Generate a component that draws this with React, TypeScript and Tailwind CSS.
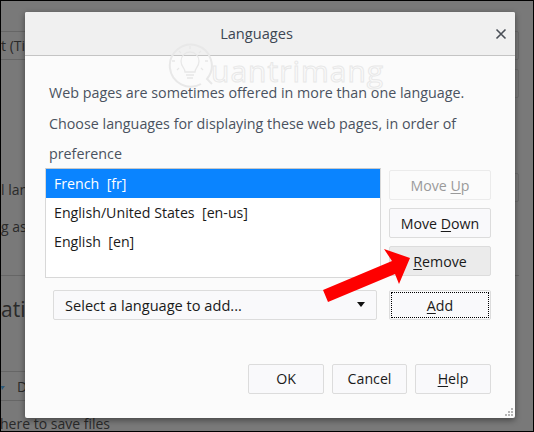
const font = "font-['Open_Sans','Noto_Sans',sans-serif]";

function Btn({ children, className = "", disabled = false }: { children: React.ReactNode; className?: string; disabled?: boolean }) {
  return (
    <div className={`h-[30px] flex items-center justify-center rounded-[2px] border text-[14.2px] ${disabled ? "text-[#9a9a9a] border-[#ebebeb]" : "text-[#1a1a1a] border-[#dcdcdc]"} ${className}`}>
      {children}
    </div>
  );
}

const bgText = "absolute text-[14px] text-[#2a2a2a] leading-[22px] whitespace-nowrap overflow-hidden";

export default function App() {
  return (
    <div className={`relative w-[534px] h-[432px] overflow-hidden bg-[#797979] border border-black ${font}`}>
      {/* page behind the dialog */}
      <div className="absolute left-0 top-[30px] w-[24px] h-[29px] border-y border-[#666] text-[14px] text-[#2a2a2a] leading-[28px] whitespace-nowrap overflow-hidden">t (Ti</div>
      <div className="absolute left-[510px] top-[30px] w-[8px] h-[29px] border border-[#6c6c6c] rounded-[2px]" />
      <div className="absolute left-[510px] top-[68px] w-[8px] h-[29px] border border-[#6c6c6c] rounded-[2px]" />
      <div className="absolute left-[510px] top-[172px] w-[8px] h-[29px] border border-[#6c6c6c] rounded-[2px]" />
      <div className={`${bgText} left-0 top-[178px] w-[24px]`}>l lan</div>
      <div className={`${bgText} left-0 top-[215px] w-[24px]`}>g as</div>
      <div className="absolute left-0 top-[274px] w-[24px] h-px bg-[#666]" />
      <div className="absolute left-[510px] top-[274px] w-[8px] h-px bg-[#666]" />
      <div className="absolute left-0 top-[293px] w-[24px] text-[21px] text-[#2a2a2a] leading-[30px] whitespace-nowrap overflow-hidden">atio</div>
      <div className="absolute left-0 top-[370px] w-[24px] h-px bg-[#666]" />
      <div className="absolute left-0 top-[399px] w-[24px] h-px bg-[#666]" />
      <svg viewBox="0 0 4 4" className="absolute left-0 top-[385px] w-[4px] h-[4px]"><path d="M0 0h4L1 4z" fill="#2b5a7a" /></svg>
      <div className={`${bgText} left-[16px] top-[375px] w-[8px]`}>D</div>
      <div className={`${bgText} -left-[1px] top-[412px] overflow-visible`}>here to save files</div>

      {/* dialog */}
      <div className="absolute left-[24px] top-[11px] w-[490px] h-[406px] rounded-[2px] bg-[#fbfbfb] shadow-[0_2px_6px_rgba(0,0,0,0.45)] flex flex-col">
        <div className="relative h-[44px] shrink-0 bg-[#f0f0f0] border-b border-[#c4c4c4] rounded-t-[2px] flex items-center justify-center pr-[27px] pt-[1px] text-[14.6px] text-[#3d4653]">
          Languages
          <svg viewBox="0 0 12 12" className="absolute right-[8px] top-[16px] w-[12px] h-[12px]" fill="none" stroke="#4a4f57" strokeWidth="1.6">
            <path d="M1.5 1.5l9 9M10.5 1.5l-9 9" />
          </svg>
        </div>

        <div className="relative flex-1 flex flex-col pl-[20px] pr-[24px]">
          {/* watermark */}
          <svg viewBox="0 0 50 50" className="absolute left-[140px] -top-[13px] w-[50px] h-[50px] pointer-events-none" fill="none" stroke="#e8e8e8">
            <path d="M36 41A21 21 0 1 1 42 36L47 41" strokeWidth="2" />
            <path d="M20 29c0-4-4-5-4-11a9 9 0 0 1 18 0c0 6-4 7-4 11z" strokeWidth="1.3" />
            <path d="M21 32h8M22 35h6M25 3v3M10 18H7M43 18h-3M14 8l2 2M36 8l-2 2M12 27l2-2M38 27l-2-2" strokeWidth="1.3" />
          </svg>
          <div className="absolute left-[186px] -top-[5px] text-[30px] tracking-[1px] leading-[40px] text-[#fbfbfb] [-webkit-text-stroke:1px_#e8e8e8] whitespace-nowrap pointer-events-none">uantrimang</div>

          <div className="relative pl-[4px] pt-[22px] text-[14.3px] leading-[30px] text-[#4a5260] whitespace-nowrap">
            <p>Web pages are sometimes offered in more than one language.</p>
            <p className="pt-[1px] -mb-[1px]">Choose languages for displaying these web pages, in order of</p>
            <p className="pt-[1px] -mb-[1px]">preference</p>
          </div>

          <div className="flex gap-[8px]">
            <div className="w-[336px] h-[110px] border border-[#d8d8d8] border-t-[#c8c8c8] bg-white text-[14.2px] text-[#1a1a1a]">
              <div className="h-[29px] pt-[1px] bg-[#0a84ff] text-white pl-[8px] flex items-center whitespace-pre">French  [fr]</div>
              <div className="h-[29px] pt-[1px] pl-[8px] flex items-center whitespace-pre">English/United States  [en-us]</div>
              <div className="h-[29px] pt-[1px] pl-[8px] flex items-center whitespace-pre">English  [en]</div>
            </div>
            <div className="flex flex-col gap-[8px] w-[102px] pt-[2px]">
              <Btn disabled className="bg-[#fbfbfb] pt-[2px]"><span className="whitespace-pre">Move <span className="underline underline-offset-2">U</span>p</span></Btn>
              <Btn className="bg-[#f9f9fb] pt-[2px]"><span className="whitespace-pre">Move <span className="underline underline-offset-2">D</span>own</span></Btn>
              <Btn className="bg-[#ebebeb] pt-[2px]"><span><span className="underline underline-offset-2">R</span>emove</span></Btn>
            </div>
          </div>

          <div className="flex mt-[12px] ml-[8px] gap-[12px]">
            <div className="w-[324px] h-[30px] pt-[2px] rounded-[2px] border border-[#dcdcdc] bg-[#f9f9fb] flex items-center justify-between pl-[11px] pr-[11px] text-[14.6px] text-[#1a1a1a]">
              Select a language to add...
              <svg viewBox="0 0 8 5" className="w-[8px] h-[5px] -mt-[3px]"><path d="M0 0h8L4 5z" fill="#111" /></svg>
            </div>
            <Btn className="w-[102px] bg-[#f9f9fb]">
              <span className="w-[98px] h-[26px] pt-[2px] flex items-center justify-center border border-dotted border-black"><span><span className="underline underline-offset-2">A</span>dd</span></span>
            </Btn>
          </div>

          <div className="flex justify-end gap-[8px] mt-[44px]">
            <Btn className="w-[76px] bg-[#f9f9fb]">OK</Btn>
            <Btn className="w-[75px] bg-[#f9f9fb]">Cancel</Btn>
            <Btn className="w-[76px] bg-[#f9f9fb]"><span><span className="underline underline-offset-2">H</span>elp</span></Btn>
          </div>
        </div>

        <div className="absolute right-[2px] bottom-[2px] grid grid-cols-3 gap-[1px]">
          {[0, 0, 1, 0, 1, 1, 1, 1, 1].map((v, i) => (
            <div key={i} className={v ? "w-[2px] h-[2px] bg-[#b5b5b5]" : "w-[2px] h-[2px]"} />
          ))}
        </div>
      </div>

      {/* red arrow */}
      <svg viewBox="0 0 534 432" className="absolute left-[-1px] top-[-1px] w-[534px] h-[432px] pointer-events-none">
        <path d="M323 290 L392 261 L384 249 L410 258 L399 284 L395 274 L328 302 Z" fill="#fe0000" />
      </svg>
    </div>
  );
}
